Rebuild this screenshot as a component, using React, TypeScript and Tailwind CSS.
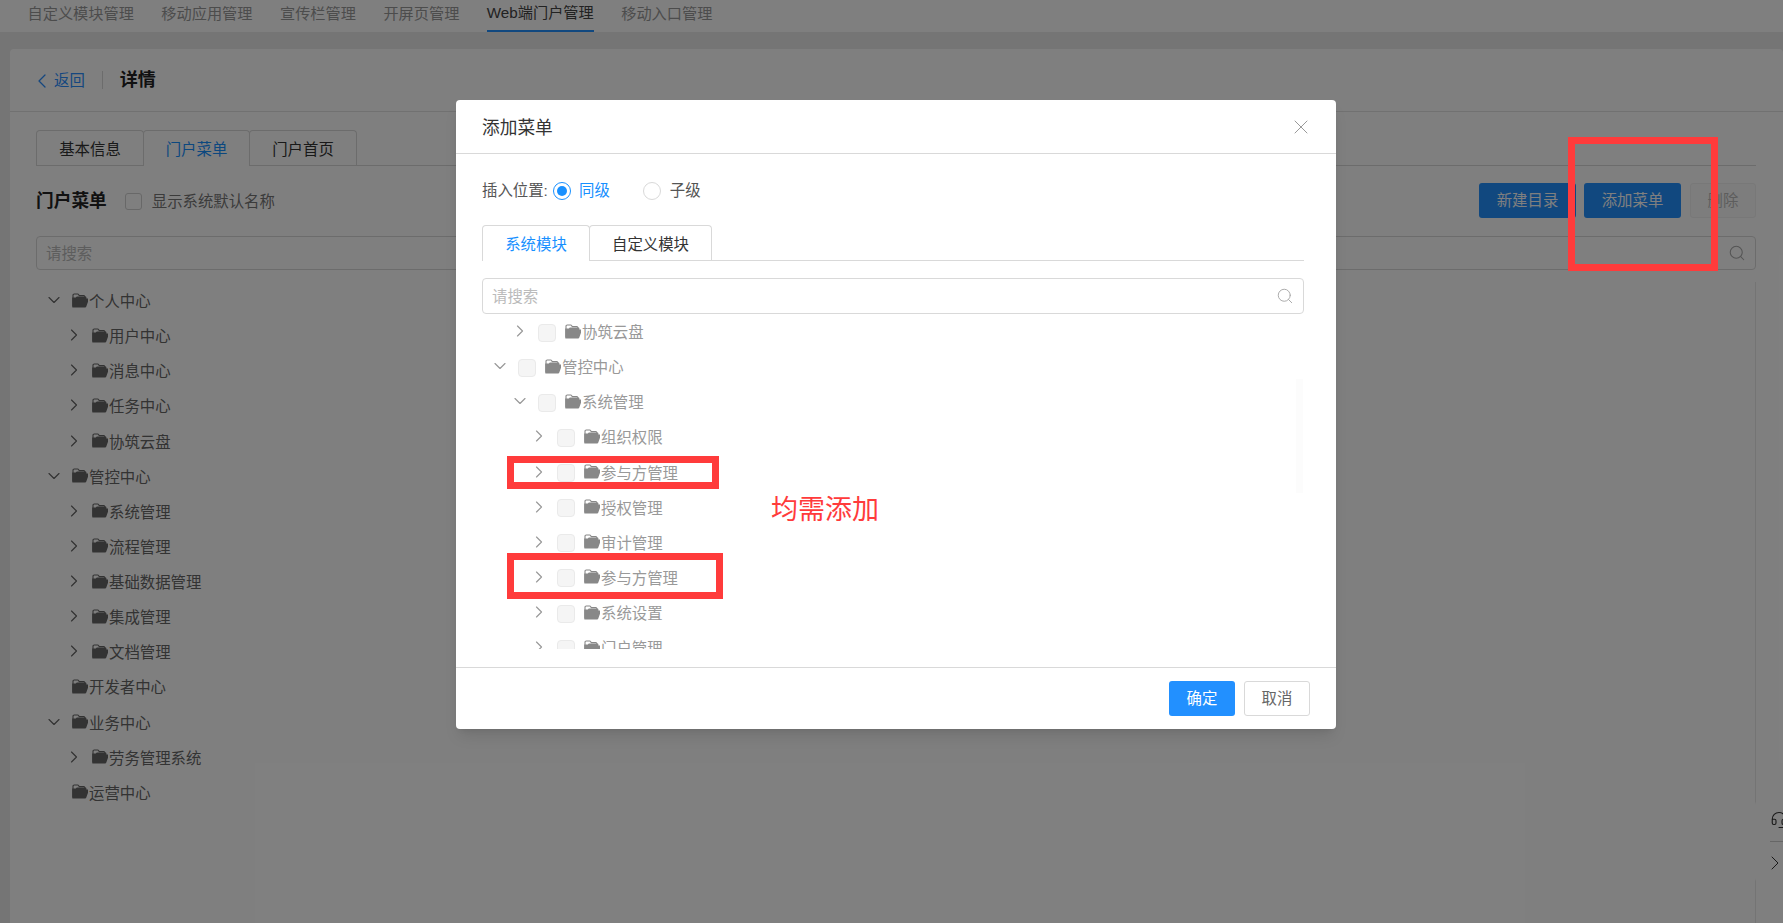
import { ChevronDown, ChevronLeft, ChevronRight, Headset, Search, X } from 'lucide-react';

const FONT = "font-['Liberation_Sans','Noto_Sans_CJK_SC',sans-serif]";

type TreeRow = { label: string; depth: 1 | 2 | 3; open?: boolean; leaf?: boolean };

const navItems = ['自定义模块管理', '移动应用管理', '宣传栏管理', '开屏页管理', 'Web端门户管理', '移动入口管理'];

const pageTree: TreeRow[] = [
  { label: '个人中心', depth: 1, open: true },
  { label: '用户中心', depth: 2 },
  { label: '消息中心', depth: 2 },
  { label: '任务中心', depth: 2 },
  { label: '协筑云盘', depth: 2 },
  { label: '管控中心', depth: 1, open: true },
  { label: '系统管理', depth: 2 },
  { label: '流程管理', depth: 2 },
  { label: '基础数据管理', depth: 2 },
  { label: '集成管理', depth: 2 },
  { label: '文档管理', depth: 2 },
  { label: '开发者中心', depth: 1, leaf: true },
  { label: '业务中心', depth: 1, open: true },
  { label: '劳务管理系统', depth: 2 },
  { label: '运营中心', depth: 1, leaf: true },
];

const modalTree: TreeRow[] = [
  { label: '协筑云盘', depth: 2 },
  { label: '管控中心', depth: 1, open: true },
  { label: '系统管理', depth: 2, open: true },
  { label: '组织权限', depth: 3 },
  { label: '参与方管理', depth: 3 },
  { label: '授权管理', depth: 3 },
  { label: '审计管理', depth: 3 },
  { label: '参与方管理', depth: 3 },
  { label: '系统设置', depth: 3 },
  { label: '门户管理', depth: 3 },
];

const indent = { 1: 'pl-[8px]', 2: 'pl-[28px]', 3: 'pl-[47px]' };

const Folder = ({ className }: { className: string }) => (
  <svg viewBox="0 0 16 15" className={`h-[15px] w-[16px] shrink-0 mb-[3px] ${className}`}>
    <path d="M1 13V2.2C1 1.5 1.5 1 2.2 1h3.4c.5 0 .8.2 1 .6l.6 1h4.6c.6 0 1 .4 1 1V5" fill="none" stroke="currentColor" strokeWidth="1.1" />
    <path d="M1 14.6c-.5 0-.8-.4-.8-.9V4.6h3.6l1-1.2h8.6c.6 0 1 .4 1 1v1.2h1.6c.6 0 .9.5.7 1l-2.4 7c-.2.6-.6 1-1.2 1z" fill="currentColor" />
  </svg>
);

const Chevron = ({ row }: { row: TreeRow }) => (
  <span className="flex w-[20px] shrink-0 items-center justify-center mb-[3px]">
    {row.leaf ? null : row.open ? <ChevronDown size={24} strokeWidth={1.4} /> : <ChevronRight size={24} strokeWidth={1.4} />}
  </span>
);

const Tabs = ({ items, active, widths }: { items: string[]; active: number; widths: string[] }) => (
  <div className="flex h-[36px] border-b border-[#d9d9d9] text-[15.4px]">
    {items.map((item, i) => (
      <div
        key={item}
        className={`flex h-[36px] items-center justify-center rounded-t-[4px] border border-b-0 border-[#d9d9d9] pt-[2px] ${widths[i]} ${i > 0 ? '-ml-px' : ''} ${
          i === active ? 'bg-white text-[#1890ff]' : 'h-[35px] text-[#333]'
        }`}
      >
        {item}
      </div>
    ))}
  </div>
);

const Page = () => (
  <div className="flex h-full flex-col">
    <nav className="flex h-[32px] shrink-0 items-start gap-[27.5px] bg-white pl-[27.5px] text-[15.2px] text-[#999]">
      {navItems.map((item) => (
        <a key={item} className={`flex h-[32px] items-center pb-[3px] ${item.startsWith('Web') ? 'border-b-2 border-[#2290ff] text-[#444]' : ''}`}>
          {item}
        </a>
      ))}
    </nav>
    <section className="ml-[10px] mt-[17px] flex-1 rounded-t-[4px] bg-white">
      <header className="flex h-[63px] items-center border-b border-[#e2e2e2] pl-[20px]">
        <span className="flex items-center pt-[1px] text-[15.4px] text-[#2b8eff]">
          <ChevronLeft size={24} strokeWidth={1.3} />
          <span>返回</span>
        </span>
        <span className="ml-[17px] h-[18px] w-px bg-[#d9d9d9]" />
        <h1 className="ml-[17px] pt-[1px] text-[18px] font-bold text-[#222]">详情</h1>
      </header>
      <div className="pl-[26px] pr-[27px]">
        <div className="mt-[18px]">
          <Tabs items={['基本信息', '门户菜单', '门户首页']} active={1} widths={['w-[108px]', 'w-[107px]', 'w-[108px]']} />
        </div>
        <div className="mt-[17px] flex h-[35px] items-center">
          <h2 className="pt-[2px] text-[17.7px] font-bold text-[#222]">门户菜单</h2>
          <span className="ml-[18px] mt-[2px] h-[17px] w-[17px] rounded-[3px] border border-[#d0d0d0]" />
          <span className="ml-[10px] pt-[2px] text-[15.4px] text-[#777]">显示系统默认名称</span>
          <div className="ml-auto flex gap-[8px] text-[15.4px]">
            <button className="h-[35px] w-[97px] rounded-[3px] bg-[#2290ff] pt-[1px] text-white">新建目录</button>
            <button className="h-[35px] w-[97px] rounded-[3px] bg-[#2290ff] pt-[1px] text-white">添加菜单</button>
            <button className="ml-[1px] h-[35px] w-[66px] rounded-[3px] border border-[#f0f0f0] bg-[#fafafa] pt-[1px] text-[#bbb]">删除</button>
          </div>
        </div>
        <div className="mt-[18px] flex h-[34px] items-center justify-between rounded-[4px] border border-[#d9d9d9] pl-[9px] pr-[9px] text-[15.4px] text-[#bbb]">
          <span className="pt-[2px]">请搜索</span>
          <Search size={18} strokeWidth={1.4} className="text-[#aaa]" />
        </div>
        <div className="mt-[12px] h-[641px] border-r border-[#e8e8e8] pt-[2px] text-[15.4px] text-[#666]">
          {pageTree.map((row) => (
            <div key={row.label} className={`flex h-[35.14px] items-center ${indent[row.depth]}`}>
              <Chevron row={row} />
              <Folder className="ml-[8px] text-[#666]" />
              <span className="ml-px">{row.label}</span>
            </div>
          ))}
        </div>
      </div>
    </section>
  </div>
);

const Modal = () => (
  <div className="absolute left-[456px] top-[100px] flex h-[629px] w-[880px] flex-col rounded-[4px] bg-white shadow-lg">
    <div className="flex h-[54px] shrink-0 items-center justify-between border-b border-[#d9d9d9] pl-[26px] pr-[23px]">
      <h3 className="pt-[3px] text-[17.7px] text-[#333]">添加菜单</h3>
      <X size={24} strokeWidth={1} className="text-[#999]" />
    </div>
    <div className="flex-1 pl-[26px] pr-[32px] text-[15.4px]">
      <div className="mt-[24px] flex h-[26px] items-center text-[#555]">
        <span className="w-[71px]">插入位置:</span>
        <span className="flex h-[18px] w-[18px] items-center justify-center rounded-full border border-[#1890ff]">
          <span className="h-[10px] w-[10px] rounded-full bg-[#1890ff]" />
        </span>
        <span className="ml-[8px] text-[#1890ff]">同级</span>
        <span className="ml-[33px] h-[18px] w-[18px] rounded-full border border-[#d9d9d9]" />
        <span className="ml-[9px]">子级</span>
      </div>
      <div className="mt-[21px]">
        <Tabs items={['系统模块', '自定义模块']} active={0} widths={['w-[108px]', 'w-[123px]']} />
      </div>
      <div className="mt-[17px] flex h-[36px] items-center justify-between rounded-[4px] border border-[#d9d9d9] pl-[9px] pr-[9px] text-[#bbb]">
        <span className="pt-[1px]">请搜索</span>
        <Search size={18} strokeWidth={1.3} className="text-[#aaa]" />
      </div>
      <div className="relative h-[335px] overflow-hidden pt-[1px] text-[#999]">
        {modalTree.map((row, i) => (
          <div key={i} className={`flex h-[35.14px] items-center ${indent[row.depth]}`}>
            <Chevron row={row} />
            <span className="ml-[8px] h-[18px] w-[18px] shrink-0 rounded-[4px] border border-[#eaeaea] bg-[#f5f5f5]" />
            <Folder className="ml-[9px] text-[#888]" />
            <span className="ml-px">{row.label}</span>
          </div>
        ))}
        <span className="absolute right-[1px] top-[65px] h-[114px] w-[7px] bg-[#fcfcfc]" />
      </div>
    </div>
    <div className="flex h-[62px] shrink-0 justify-end gap-[9px] border-t border-[#d9d9d9] pr-[26px] pt-[13px] text-[15.4px]">
      <button className="h-[35px] w-[66px] rounded-[3px] bg-[#2290ff] text-white">确定</button>
      <button className="h-[35px] w-[66px] rounded-[3px] border border-[#d9d9d9] bg-white text-[#666]">取消</button>
    </div>
  </div>
);

export default function App() {
  return (
    <div className={`relative h-[923px] w-[1783px] overflow-hidden bg-[#ebebeb] ${FONT}`}>
      <Page />
      <div className="absolute right-0 top-[799px] h-[85px] w-[28px] overflow-hidden rounded-l-[6px] bg-white text-[#333]">
        <div className="w-[60px] pl-[15px]">
          <div className="flex h-[42px] items-center">
            <Headset size={18} strokeWidth={1.5} />
          </div>
          <div className="h-px bg-[#ccc]" />
          <div className="flex h-[42px] items-center -ml-[7px]">
            <ChevronRight size={24} strokeWidth={1} />
          </div>
        </div>
      </div>
      <div className="absolute inset-0 bg-black/50" />
      <Modal />
      {/* annotations drawn on top of the screenshot */}
      <div className="absolute left-[1568px] top-[137px] h-[134px] w-[150px] border-[7px] border-[#ff3b3b]" />
      <div className="absolute left-[507px] top-[456px] h-[33px] w-[212px] border-[7px] border-[#ff3b3b]" />
      <div className="absolute left-[507px] top-[553px] h-[46px] w-[216px] border-[7px] border-[#ff3b3b]" />
      <div className="absolute left-[771px] top-[490px] text-[27px] leading-[40px] text-[#ff3b3b]">均需添加</div>
    </div>
  );
}
